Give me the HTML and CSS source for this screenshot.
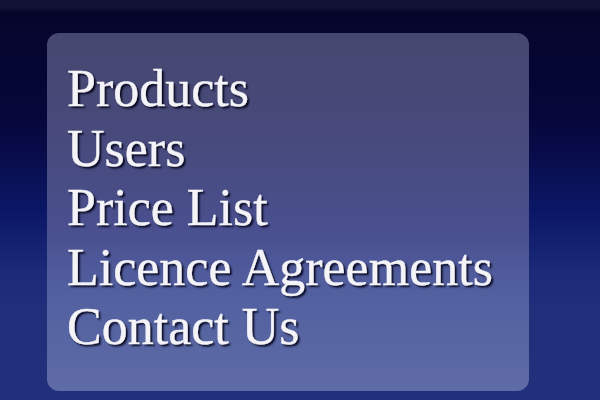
FILE: index.html
```html
<!DOCTYPE html>
<html lang="en">

<head>
    <meta charset="UTF-8">
    <meta name="viewport" content="width=device-width, initial-scale=1.0">
    <title>Menu</title>
    <link rel="stylesheet" href="styles.css">
</head>

<body>
    <div class="stage">
        <nav class="menu">
            <a href="#" class="menu-item">Products</a>
            <a href="#" class="menu-item">Users</a>
            <a href="#" class="menu-item">Price List</a>
            <a href="#" class="menu-item">Licence Agreements</a>
            <a href="#" class="menu-item">Contact Us</a>
        </nav>
    </div>
</body>

</html>
```

FILE: styles.css
```css
:root {
    --bg-top: #05052a;
    --bg-bottom: #20307a;
    --panel-top: #464770;
    --panel-mid: #4a5090;
    --panel-bottom: #5e6ba6;
    --text-color: #f4f4f8;
}

html,
body {
    margin: 0;
    height: 100%;
}

body {
    font-family: "Liberation Serif", "Times New Roman", serif;
    background-color: var(--bg-top);
    overflow: hidden;
}

.stage {
    height: 400px;
    padding: 33px 0 0 47px;
    box-sizing: border-box;
    background:
        linear-gradient(180deg, #121236 0, #121236 8px, transparent 12px),
        linear-gradient(180deg, var(--bg-top) 0, #06063a 120px, #0b1766 210px, #1a2a78 270px, #1f2f7a 310px, var(--bg-bottom) 400px);
}

.menu {
    width: 482px;
    height: 358px;
    box-sizing: border-box;
    padding: 26px 0 0 20px;
    display: flex;
    flex-direction: column;
    border-radius: 12px;
    background: linear-gradient(180deg, var(--panel-top) 0, #474a7c 110px, var(--panel-mid) 200px, #5260a0 260px, var(--panel-bottom) 358px);
}

.menu-item {
    font-size: 52px;
    line-height: 59.5px;
    color: var(--text-color);
    text-decoration: none;
    -webkit-text-stroke: 0.4px var(--text-color);
    text-shadow: 2px 2px 2px rgba(0, 0, 20, 0.9);
    white-space: nowrap;
}
```
